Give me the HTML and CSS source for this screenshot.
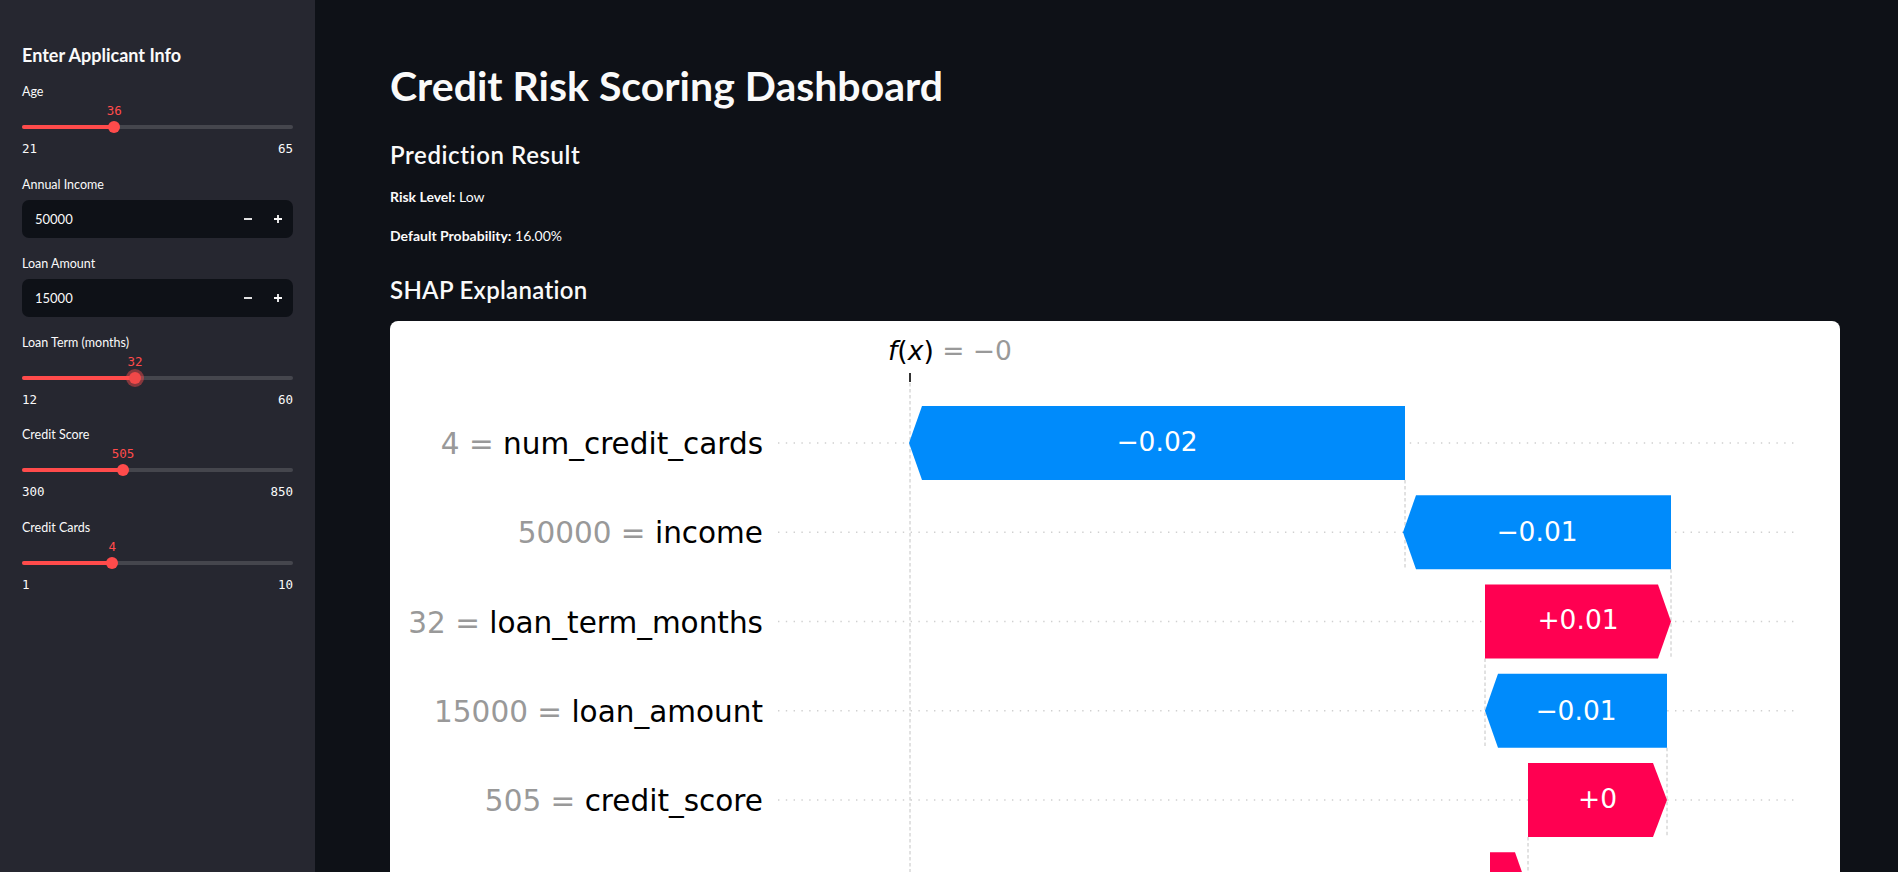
FILE: index.html
```html
<!DOCTYPE html>
<html lang="en">
<head>
<meta charset="utf-8">
<title>Credit Risk Scoring Dashboard</title>
<link rel="stylesheet" href="styles.css">
</head>
<body>
<div class="app">
  <aside class="sidebar">
    <h2 class="side-title">Enter Applicant Info</h2>

    <div class="slider">
      <div class="w-label">Age</div>
      <div class="val-row"><span class="val" style="left:34.09%">36</span></div>
      <div class="track-row">
        <div class="track"><div class="fill" style="width:34.09%"></div></div>
        <span class="thumb" style="left:34.09%"></span>
      </div>
      <div class="minmax"><span>21</span><span>65</span></div>
    </div>

    <div class="num-widget">
      <div class="w-label">Annual Income</div>
      <div class="num-input">
        <span class="num-val">50000</span>
        <span class="step"><svg width="10" height="10" viewBox="0 0 10 10"><path d="M1 5h8" stroke="#fafafa" stroke-width="1.8"/></svg></span>
        <span class="step"><svg width="10" height="10" viewBox="0 0 10 10"><path d="M1 5h8M5 1v8" stroke="#fafafa" stroke-width="1.8"/></svg></span>
      </div>
    </div>

    <div class="num-widget">
      <div class="w-label">Loan Amount</div>
      <div class="num-input">
        <span class="num-val">15000</span>
        <span class="step"><svg width="10" height="10" viewBox="0 0 10 10"><path d="M1 5h8" stroke="#fafafa" stroke-width="1.8"/></svg></span>
        <span class="step"><svg width="10" height="10" viewBox="0 0 10 10"><path d="M1 5h8M5 1v8" stroke="#fafafa" stroke-width="1.8"/></svg></span>
      </div>
    </div>

    <div class="slider">
      <div class="w-label">Loan Term (months)</div>
      <div class="val-row"><span class="val" style="left:41.67%">32</span></div>
      <div class="track-row">
        <div class="track"><div class="fill" style="width:41.67%"></div></div>
        <span class="thumb focused" style="left:41.67%"></span>
      </div>
      <div class="minmax"><span>12</span><span>60</span></div>
    </div>

    <div class="slider">
      <div class="w-label">Credit Score</div>
      <div class="val-row"><span class="val" style="left:37.27%">505</span></div>
      <div class="track-row">
        <div class="track"><div class="fill" style="width:37.27%"></div></div>
        <span class="thumb" style="left:37.27%"></span>
      </div>
      <div class="minmax"><span>300</span><span>850</span></div>
    </div>

    <div class="slider">
      <div class="w-label">Credit Cards</div>
      <div class="val-row"><span class="val" style="left:33.33%">4</span></div>
      <div class="track-row">
        <div class="track"><div class="fill" style="width:33.33%"></div></div>
        <span class="thumb" style="left:33.33%"></span>
      </div>
      <div class="minmax"><span>1</span><span>10</span></div>
    </div>
  </aside>

  <main class="main">
    <h1 class="title">Credit Risk Scoring Dashboard</h1>
    <h3 class="sub sub-pred">Prediction Result</h3>
    <p class="line line-risk"><strong>Risk Level:</strong> Low</p>
    <p class="line line-def"><strong>Default Probability:</strong> 16.00%</p>
    <h3 class="sub sub-shap">SHAP Explanation</h3>

    <div class="card">
      <svg class="chart" width="1450" height="551" viewBox="0 0 1450 551">
        <g class="grid">
          <line x1="388" y1="122" x2="1407" y2="122"/>
          <line x1="388" y1="211.25" x2="1407" y2="211.25"/>
          <line x1="388" y1="300.5" x2="1407" y2="300.5"/>
          <line x1="388" y1="389.75" x2="1407" y2="389.75"/>
          <line x1="388" y1="479" x2="1407" y2="479"/>
        </g>
        <g class="dash">
          <line x1="520" y1="62" x2="520" y2="551"/>
          <line x1="1015" y1="159" x2="1015" y2="248.25"/>
          <line x1="1281" y1="248.25" x2="1281" y2="337.5"/>
          <line x1="1095" y1="337.5" x2="1095" y2="426.75"/>
          <line x1="1277" y1="426.75" x2="1277" y2="516"/>
          <line x1="1138" y1="516" x2="1138" y2="551"/>
        </g>
        <line x1="520" y1="52" x2="520" y2="61" stroke="#333" stroke-width="2"/>
        <text class="fx" x="498" y="39"><tspan font-style="italic">f</tspan>(<tspan font-style="italic">x</tspan>)<tspan fill="#999999"> = −0</tspan></text>

        <polygon class="neg" points="519,122 532,85 1015,85 1015,159 532,159"/>
        <polygon class="neg" points="1013,211.25 1026,174.25 1281,174.25 1281,248.25 1026,248.25"/>
        <polygon class="pos" points="1095,263.5 1268,263.5 1281,300.5 1268,337.5 1095,337.5"/>
        <polygon class="neg" points="1095,389.75 1108,352.75 1277,352.75 1277,426.75 1108,426.75"/>
        <polygon class="pos" points="1138,442 1263,442 1277,479 1263,516 1138,516"/>
        <polygon class="pos" points="1100,531.25 1125,531.25 1138,568.25 1125,605.25 1100,605.25"/>

        <g class="barval">
          <text x="767" y="130">−0.02</text>
          <text x="1147" y="220">−0.01</text>
          <text x="1188" y="308">+0.01</text>
          <text x="1186" y="399">−0.01</text>
          <text x="1207.5" y="487">+0</text>
        </g>

        <g class="ylab">
          <text x="373" y="133"><tspan class="gv">4 = </tspan>num_credit_cards</text>
          <text x="373" y="222"><tspan class="gv">50000 = </tspan>income</text>
          <text x="373" y="312"><tspan class="gv">32 = </tspan>loan_term_months</text>
          <text x="373" y="401"><tspan class="gv">15000 = </tspan>loan_amount</text>
          <text x="373" y="490"><tspan class="gv">505 = </tspan>credit_score</text>
        </g>
      </svg>
    </div>
  </main>
</div>
</body>
</html>
```

FILE: styles.css
```css
* { box-sizing: border-box; }

html, body {
  margin: 0;
  padding: 0;
  height: 100%;
  overflow: hidden;
  background: #0e1117;
}

body {
  font-family: Lato, "Liberation Sans", sans-serif;
  color: #fafafa;
}

.app {
  display: flex;
  height: 100vh;
}

/* ---------- Sidebar ---------- */
.sidebar {
  width: 315px;
  flex: 0 0 315px;
  background: #262730;
  padding: 43px 22px 0 22px;
}

.side-title {
  margin: 0 0 17px 0;
  font-size: 18px;
  line-height: 24px;
  font-weight: 700;
}

.w-label {
  font-size: 12.5px;
  line-height: 16px;
}

.slider {
  margin-bottom: 19.5px;
}

.val-row {
  position: relative;
  height: 16px;
  margin-top: 3px;
}

.val {
  position: absolute;
  top: 0;
  transform: translateX(-50%);
  font-family: "DejaVu Sans Mono", "Liberation Mono", monospace;
  font-size: 12.5px;
  line-height: 16px;
  color: #ff4b4b;
}

.track-row {
  position: relative;
  height: 16px;
  display: flex;
  align-items: center;
}

.track {
  flex: 1;
  height: 4px;
  border-radius: 2px;
  background: rgba(250, 250, 250, 0.15);
  display: flex;
}

.fill {
  height: 100%;
  border-radius: 2px;
  background: #ff4b4b;
}

.thumb {
  position: absolute;
  top: 2px;
  width: 12px;
  height: 12px;
  margin-left: -6px;
  border-radius: 50%;
  background: #ff4b4b;
}

.thumb.focused {
  background: #f04848;
  box-shadow: 0 0 0 3px rgba(255, 75, 75, 0.45);
}

.minmax {
  margin-top: 6px;
  display: flex;
  justify-content: space-between;
  font-family: "DejaVu Sans Mono", "Liberation Mono", monospace;
  font-size: 12.5px;
  line-height: 16px;
  color: #fafafa;
}

.num-widget {
  margin-bottom: 18px;
}

.num-input {
  margin-top: 7px;
  height: 38px;
  border-radius: 7px;
  background: #0e1117;
  display: flex;
  align-items: center;
  padding-left: 13px;
}

.num-val {
  flex: 1;
  font-size: 13px;
  color: #fafafa;
}

.step {
  width: 30px;
  height: 38px;
  display: flex;
  align-items: center;
  justify-content: center;
}

/* ---------- Main ---------- */
.main {
  flex: 1;
  padding: 60px 58px 0 75px;
  min-width: 0;
}

.title {
  margin: 0;
  font-size: 41px;
  line-height: 52px;
  font-weight: 700;
  letter-spacing: 0;
}

.sub {
  margin: 0;
  font-weight: 600;
  line-height: 30px;
  font-size: 24px;
}

.sub-pred {
  margin-top: 28px;
  letter-spacing: 0.6px;
}

.sub-shap {
  margin-top: 30px;
  letter-spacing: 0.3px;
}

.line {
  margin: 0;
  font-size: 14px;
  line-height: 18px;
}

.line strong { font-weight: 700; }

.line-risk { margin-top: 18px; }
.line-def { margin-top: 21px; }

.card {
  margin-top: 16px;
  height: 551px;
  background: #ffffff;
  border-radius: 8px 8px 0 0;
  overflow: hidden;
}

.chart {
  display: block;
  font-family: "DejaVu Sans", sans-serif;
}

.grid line {
  stroke: #d0d0d0;
  stroke-width: 1.4;
  stroke-dasharray: 1.4 6.4;
}

.dash line {
  stroke: #c4c4c4;
  stroke-width: 1;
  stroke-dasharray: 3.5 2.5;
}

.fx {
  font-size: 26.5px;
  fill: #000;
}

.neg { fill: #008bfb; }
.pos { fill: #ff0051; }

.barval text {
  font-size: 26.5px;
  fill: #ffffff;
  text-anchor: middle;
}

.ylab text {
  font-size: 29.5px;
  fill: #000;
  text-anchor: end;
}

.ylab .gv { fill: #999999; }
```
